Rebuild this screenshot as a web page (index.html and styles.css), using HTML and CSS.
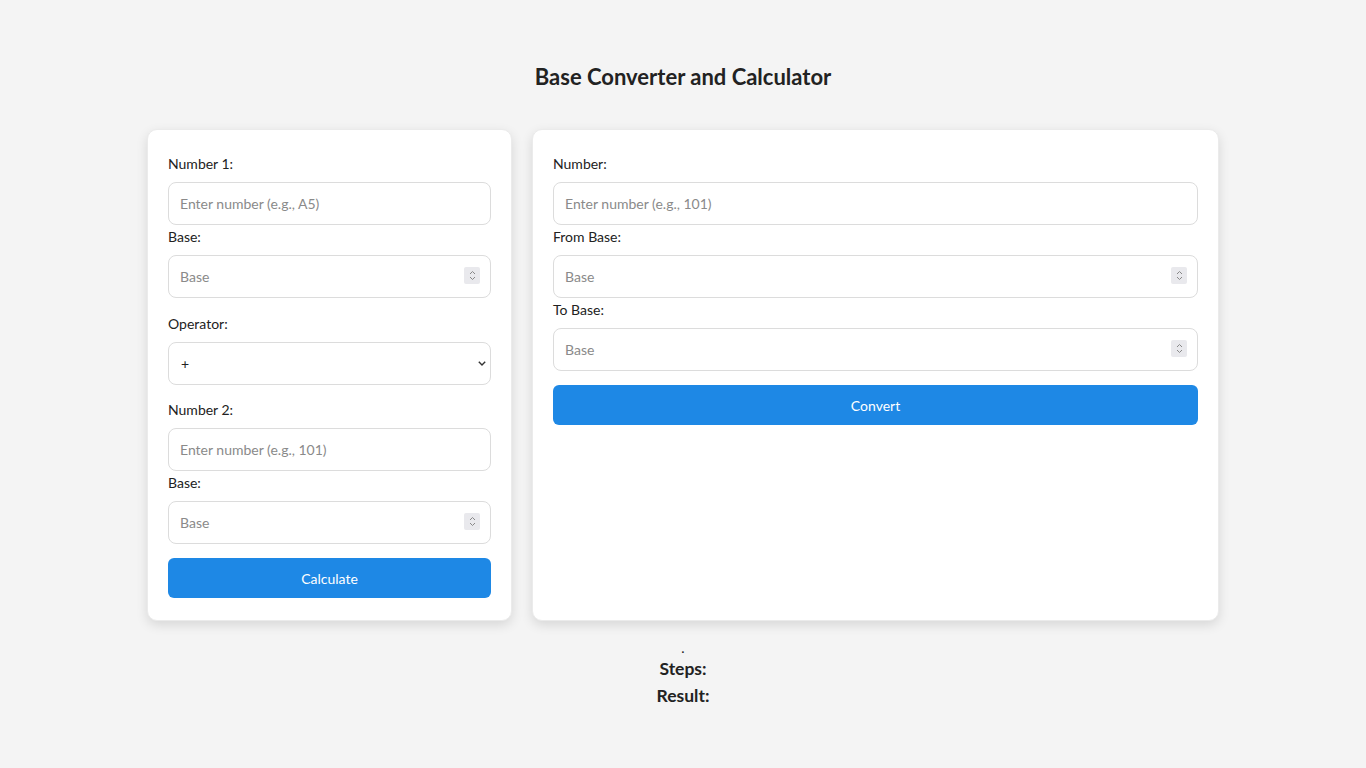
FILE: index.html
```html
<!DOCTYPE html>
<html lang="en">
<head>
<meta charset="utf-8">
<title>Base Converter and Calculator</title>
<link rel="stylesheet" href="styles.css">
</head>
<body>
<div class="page">
  <h1 class="title">Base Converter and Calculator</h1>
  <div class="cards">
    <div class="card card-calc">
      <div class="group">
        <label class="label">Number 1:</label>
        <input class="field" type="text" placeholder="Enter number (e.g., A5)">
        <label class="label">Base:</label>
        <div class="num-wrap">
          <input class="field" type="number" placeholder="Base">
          <span class="spin"><svg width="7" height="11" viewBox="0 0 7 11"><path d="M1 4 L3.5 1.5 L6 4 M1 7 L3.5 9.5 L6 7" fill="none" stroke="#888" stroke-width="1"/></svg></span>
        </div>
      </div>
      <div class="group group-select">
        <label class="label">Operator:</label>
        <div class="select-wrap">
          <select class="field select">
            <option>+</option>
            <option>-</option>
            <option>*</option>
            <option>/</option>
          </select>
          <span class="chev"><svg width="8" height="5" viewBox="0 0 8 5"><path d="M0.8 0.8 L4 4 L7.2 0.8" fill="none" stroke="#333" stroke-width="1.4"/></svg></span>
        </div>
      </div>
      <div class="group group-last">
        <label class="label">Number 2:</label>
        <input class="field" type="text" placeholder="Enter number (e.g., 101)">
        <label class="label">Base:</label>
        <div class="num-wrap">
          <input class="field" type="number" placeholder="Base">
          <span class="spin"><svg width="7" height="11" viewBox="0 0 7 11"><path d="M1 4 L3.5 1.5 L6 4 M1 7 L3.5 9.5 L6 7" fill="none" stroke="#888" stroke-width="1"/></svg></span>
        </div>
      </div>
      <button class="btn">Calculate</button>
    </div>
    <div class="card card-conv">
      <div class="group group-last">
        <label class="label">Number:</label>
        <input class="field" type="text" placeholder="Enter number (e.g., 101)">
        <label class="label">From Base:</label>
        <div class="num-wrap">
          <input class="field" type="number" placeholder="Base">
          <span class="spin"><svg width="7" height="11" viewBox="0 0 7 11"><path d="M1 4 L3.5 1.5 L6 4 M1 7 L3.5 9.5 L6 7" fill="none" stroke="#888" stroke-width="1"/></svg></span>
        </div>
        <label class="label">To Base:</label>
        <div class="num-wrap">
          <input class="field" type="number" placeholder="Base">
          <span class="spin"><svg width="7" height="11" viewBox="0 0 7 11"><path d="M1 4 L3.5 1.5 L6 4 M1 7 L3.5 9.5 L6 7" fill="none" stroke="#888" stroke-width="1"/></svg></span>
        </div>
      </div>
      <button class="btn">Convert</button>
    </div>
  </div>
  <div class="results">
    <div class="dot">.</div>
    <div class="res-line">Steps:</div>
    <div class="res-line">Result:</div>
  </div>
</div>
</body>
</html>
```
FILE: styles.css
```css
* { box-sizing: border-box; }
html, body {
  margin: 0;
  padding: 0;
  background: #f4f4f4;
}
body {
  font-family: Lato, "Noto Sans", sans-serif;
  color: #222;
  font-size: 14px;
}
.page {
  width: 1072px;
  margin: 0 auto;
  padding-top: 64px;
}
.title {
  margin: 0 0 39px;
  font-size: 22px;
  line-height: 26px;
  font-weight: 700;
  text-align: center;
  color: #222;
}
.cards {
  display: flex;
  gap: 20px;
  align-items: stretch;
}
.card {
  background: #fff;
  border: 1px solid #ebebeb;
  border-radius: 10px;
  box-shadow: 0 4px 12px rgba(0,0,0,0.12);
  padding: 24px 20px 22px;
  display: flex;
  flex-direction: column;
}
.card-calc { width: 365px; }
.card-conv { flex: 1; }
.group {
  display: flex;
  flex-direction: column;
  margin-bottom: 14px;
}
.group-select { margin-bottom: 13px; }
.group-last { margin-bottom: 12px; }
.label {
  display: block;
  line-height: 20px;
  font-size: 14px;
  color: #222;
  margin-bottom: 8px;
}
.field {
  display: block;
  width: 100%;
  height: 43px;
  margin: 0 0 2px;
  padding: 0 11px;
  border: 1px solid #dcdcdc;
  border-radius: 8px;
  background: #fff;
  font-family: inherit;
  font-size: 14px;
  color: #222;
  outline: none;
}
.field::placeholder { color: #8a8a8a; }
.field[type=number] { -moz-appearance: textfield; }
.field[type=number]::-webkit-inner-spin-button,
.field[type=number]::-webkit-outer-spin-button {
  -webkit-appearance: none;
  margin: 0;
}
.num-wrap, .select-wrap {
  position: relative;
}
.spin {
  position: absolute;
  right: 11px;
  top: 12px;
  width: 16px;
  height: 17px;
  background: #e9e9ed;
  border-radius: 2px;
  display: flex;
  align-items: center;
  justify-content: center;
}
.select {
  -webkit-appearance: none;
  appearance: none;
  padding-left: 12px;
}
.chev {
  position: absolute;
  right: 5px;
  top: 19px;
  width: 8px;
  height: 5px;
  display: flex;
  pointer-events: none;
}
.btn {
  display: block;
  width: 100%;
  height: 40px;
  border: none;
  border-radius: 6px;
  background: #1e88e5;
  color: #fff;
  font-family: inherit;
  font-size: 14px;
  cursor: pointer;
}
.results {
  margin-top: 20px;
  text-align: center;
}
.dot {
  font-size: 14px;
  line-height: 14px;
}
.res-line {
  font-size: 17.5px;
  font-weight: 700;
  line-height: 27px;
}
```
